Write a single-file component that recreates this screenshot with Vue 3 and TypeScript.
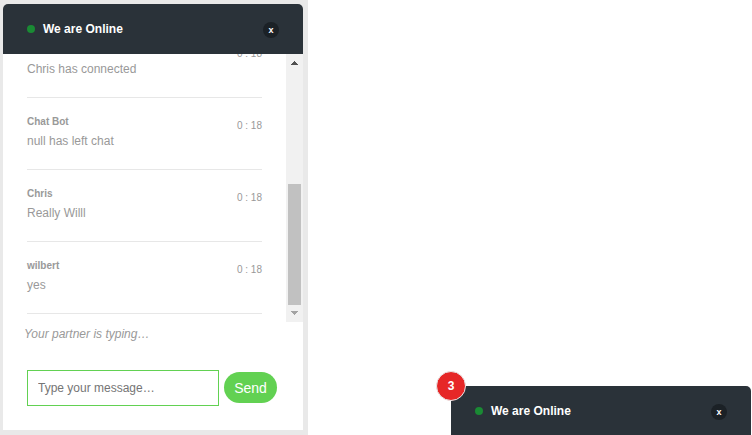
<script setup lang="ts">
import { ref } from 'vue'

interface Message {
  id: number
  author: string
  time: string
  text: string
}

const messages: Message[] = [
  { id: 1, author: 'Chat Bot', time: '0 : 18', text: 'Chris has connected' },
  { id: 2, author: 'Chat Bot', time: '0 : 18', text: 'null has left chat' },
  { id: 3, author: 'Chris', time: '0 : 18', text: 'Really Willl' },
  { id: 4, author: 'wilbert', time: '0 : 18', text: 'yes' },
]

const unread = 3
const draft = ref('')
</script>

<template>
  <main class="page">
    <div class="frame">
      <section class="chat">
        <header class="bar">
          <span class="dot"></span>
          <h2 class="title">We are Online</h2>
          <button class="close" type="button">x</button>
        </header>

        <div class="history">
          <ul class="messages">
            <li v-for="m in messages" :key="m.id" class="message">
              <div class="body">
                <strong class="author">{{ m.author }}</strong>
                <p class="text">{{ m.text }}</p>
              </div>
              <time class="time">{{ m.time }}</time>
            </li>
          </ul>
          <div class="scrollbar" aria-hidden="true">
            <svg class="arrow" viewBox="0 0 17 17" shape-rendering="crispEdges">
              <path d="M8 7h1v1h1v1h1v1h1v1H5v-1h1V9h1V8h1z" fill="#505050" />
            </svg>
            <div class="track"><div class="thumb"></div></div>
            <svg class="arrow" viewBox="0 0 17 17" shape-rendering="crispEdges">
              <path d="M5 6h7v1h-1v1h-1v1H9v1H8V9H7V8H6V7H5z" fill="#a3a3a3" />
            </svg>
          </div>
        </div>

        <p class="typing">Your partner is typing…</p>

        <form class="composer" @submit.prevent="draft = ''">
          <input v-model="draft" class="field" type="text" placeholder="Type your message…" aria-label="Type your message…" />
          <button class="send" type="submit">Send</button>
        </form>
      </section>
    </div>

    <section class="minimized">
      <header class="bar">
        <span class="dot"></span>
        <h2 class="title">We are Online</h2>
        <button class="close" type="button">x</button>
      </header>
      <span class="badge">{{ unread }}</span>
    </section>
  </main>
</template>

<style>
body {
  background: #fff;
}
</style>

<style scoped>
.page {
  box-sizing: border-box;
  display: flex;
  justify-content: space-between;
  align-items: flex-start;
  min-height: 100vh;
  padding-right: 1px;
  overflow: hidden;
  font-family: "Liberation Sans", Arial, sans-serif;
  font-size: 12px;
  line-height: 16px;
  color: #999;
}

.frame {
  padding: 4px 5px 5px 3px;
  background: #e9e9e9;
}

.chat {
  width: 300px;
  background: #fff;
  border-radius: 5px 5px 0 0;
}

.bar {
  box-sizing: border-box;
  display: flex;
  align-items: center;
  height: 50px;
  padding: 0 24px;
  background: #2a3239;
  border-radius: 5px 5px 0 0;
}

.dot {
  width: 8px;
  height: 8px;
  margin-right: 8px;
  border-radius: 50%;
  background: #1a8a34;
}

.title {
  flex: 1;
  margin: 0;
  font-size: 12px;
  line-height: 16px;
  font-weight: bold;
  color: #fff;
}

.close {
  width: 16px;
  height: 16px;
  margin-top: 2px;
  padding: 0;
  border: 0;
  border-radius: 50%;
  background: #1b2126;
  color: #fff;
  font-family: inherit;
  font-size: 9px;
  font-weight: bold;
  line-height: 16px;
}

.history {
  display: flex;
  height: 268px;
}

.messages {
  flex: 1;
  display: flex;
  flex-direction: column;
  justify-content: flex-end;
  margin: 0;
  padding: 0 24px 8px;
  overflow: hidden;
  list-style: none;
}

.message {
  flex: none;
  box-sizing: border-box;
  display: flex;
  justify-content: space-between;
  height: 72px;
  padding-top: 16px;
  border-bottom: 1px solid #e7e7e7;
}

.author {
  display: block;
  font-size: 10px;
  line-height: 16px;
}

.text {
  margin: 3px 0 0;
}

.time {
  padding-top: 4px;
  font-size: 10px;
}

.scrollbar {
  display: flex;
  flex-direction: column;
  width: 17px;
  background: #f1f1f1;
}

.arrow {
  display: block;
  width: 17px;
  height: 17px;
}

.track {
  flex: 1;
  display: flex;
  flex-direction: column;
  justify-content: flex-end;
  padding: 0 2px;
}

.thumb {
  height: 121px;
  background: #c1c1c1;
}

.typing {
  margin: 0;
  padding: 4px 21px;
  font-style: italic;
}

.composer {
  display: flex;
  align-items: center;
  gap: 5px;
  padding: 24px 26px 24px 24px;
}

.field {
  box-sizing: border-box;
  flex: 1;
  min-width: 0;
  height: 36px;
  padding: 0 10px;
  border: 1px solid #62d152;
  background: #fff;
  font-family: inherit;
  font-size: 12px;
  color: #555;
}

.field::placeholder {
  color: #757575;
}

.send {
  width: 53px;
  height: 31px;
  margin-bottom: 1px;
  padding: 0;
  border: 0;
  border-radius: 16px;
  background: #62d152;
  color: #fff;
  font-family: inherit;
  font-size: 14px;
}

.minimized {
  position: relative;
  align-self: flex-end;
  width: 300px;
  margin-bottom: -1px;
}

.minimized .bar {
  border-top-left-radius: 0;
}

.badge {
  position: absolute;
  top: -15px;
  left: -15px;
  box-sizing: border-box;
  width: 30px;
  height: 30px;
  border: 1px solid #e9e9e9;
  border-radius: 50%;
  background: #e62727;
  color: #fff;
  font-weight: bold;
  line-height: 28px;
  text-align: center;
}
</style>
